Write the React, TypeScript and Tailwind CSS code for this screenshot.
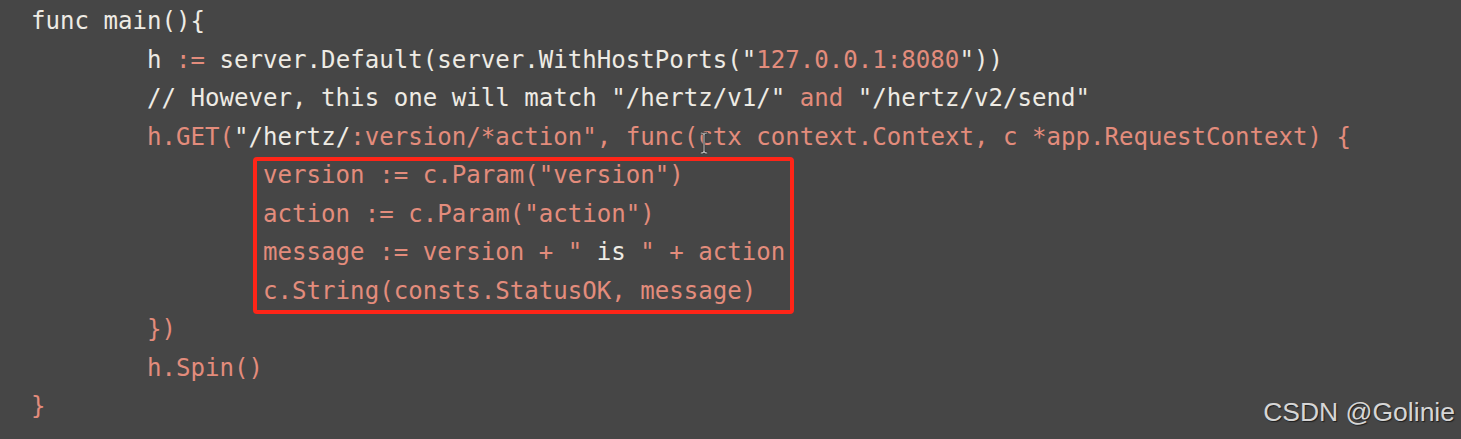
import React from "react";

const W = "text-[#eeebe4]";
const S = "text-[#e38c7c]";

type Seg = [string, string];

const before: Seg[][] = [
  [["func main(){", W]],
  [
    ["        h ", W],
    [":=", S],
    [" server.Default(server.WithHostPorts(\"", W],
    ["127.0.0.1:8080", S],
    ["\"))", W],
  ],
  [
    ["        // However, this one will match \"/hertz/v1/\" ", W],
    ["and", S],
    [" \"/hertz/v2/send\"", W],
  ],
];

const boxed: Seg[][] = [
  [["                version := c.Param(\"version\")", S]],
  [["                action := c.Param(\"action\")", S]],
  [
    ["                message := version + \" ", S],
    ["is", W],
    [" \" + action", S],
  ],
  [["                c.String(consts.StatusOK, message)", S]],
];

const after: Seg[][] = [
  [["        })", S]],
  [["        h.Spin()", S]],
  [["}", S]],
];

function Line({ segs }: { segs: Seg[] }) {
  return (
    <div className="h-[38.5px] leading-[38.5px] whitespace-pre">
      {segs.map(([t, c], i) => (
        <span key={i} className={c}>
          {t}
        </span>
      ))}
    </div>
  );
}

export default function App() {
  return (
    <div className="relative w-[1461px] h-[439px] overflow-hidden bg-[#464646]">
      <div className="flex flex-col pl-[31px] pt-[2px] font-['DejaVu_Sans_Mono',monospace] text-[24.1px]">
        {before.map((segs, i) => (
          <Line key={i} segs={segs} />
        ))}

        {/* the GET line, with the text cursor sitting on "ctx" */}
        <div className="h-[38.5px] leading-[38.5px] whitespace-pre">
          <span className={S}>{"        h.GET("}</span>
          <span className={W}>{"\"/hertz/"}</span>
          <span className={S}>{":version/*action\", func("}</span>
          <span className={`relative ${S}`}>
            c
            <svg
              className="absolute left-[1px] top-[8px]"
              width="10"
              height="24"
              viewBox="0 0 10 24"
            >
              <path
                d="M2 2 Q5 2 5 4 Q5 2 8 2 M5 4 L5 20 M2 22 Q5 22 5 20 Q5 22 8 22"
                fill="none"
                stroke="#303030"
                strokeWidth="2.4"
                strokeLinecap="round"
              />
              <path
                d="M2 2 Q5 2 5 4 Q5 2 8 2 M5 4 L5 20 M2 22 Q5 22 5 20 Q5 22 8 22"
                fill="none"
                stroke="#bdbdbd"
                strokeWidth="1.1"
                strokeLinecap="round"
              />
            </svg>
          </span>
          <span className={S}>{"tx context.Context, c *app.RequestContext) {"}</span>
        </div>

        <div className="relative">
          {boxed.map((segs, i) => (
            <Line key={i} segs={segs} />
          ))}
          {/* red annotation frame drawn over the code */}
          <span className="absolute left-[222px] top-[1px] w-[541px] h-[157px] border-4 border-[#ff2518] rounded-[4px]" />
        </div>

        {after.map((segs, i) => (
          <Line key={i} segs={segs} />
        ))}
      </div>

      <div className="absolute right-[6px] bottom-[14px] font-['Liberation_Sans',Arial,sans-serif] text-[26.5px] leading-none text-[#d6d6d6] [text-shadow:1px_1px_1px_#1e1e1e]">
        CSDN @Golinie
      </div>
    </div>
  );
}
